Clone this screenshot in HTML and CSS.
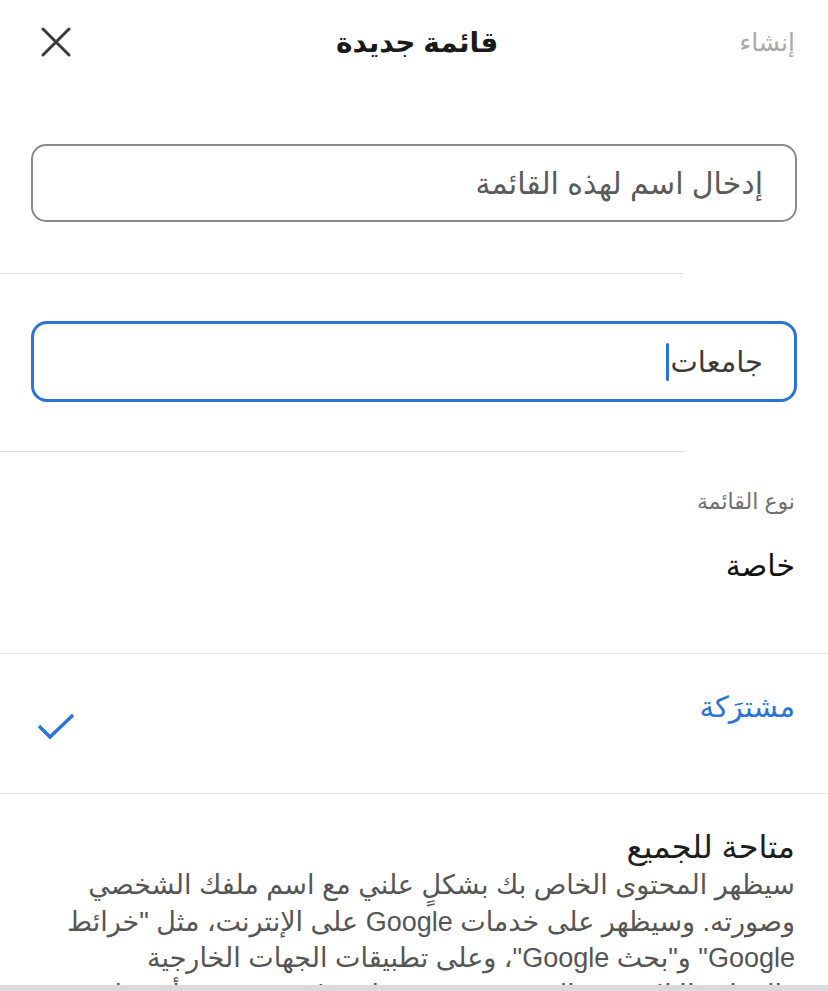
FILE: index.html
```html
<!DOCTYPE html>
<html lang="ar" dir="rtl">
<head>
    <meta charset="UTF-8">
    <meta name="viewport" content="width=device-width, initial-scale=1.0">
    <title>قائمة جديدة</title>
    <link rel="stylesheet" href="styles.css">
</head>
<body>

<div class="top-bar">
    <span class="create">إنشاء</span>
    <span class="title">قائمة جديدة</span>
    <span class="close">
        <svg width="30" height="30" viewBox="0 0 30 30">
            <path d="M2 2 L28 28 M28 2 L2 28" stroke="#3a3a3a" stroke-width="3" stroke-linecap="round" fill="none"/>
        </svg>
    </span>
</div>

<div class="section first">
    <div class="input-box">
        <span class="placeholder">إدخال اسم لهذه القائمة</span>
    </div>
</div>
<div class="short-line"></div>

<div class="section second">
    <div class="input-box active">
        <span class="value">جامعات</span><span class="caret"></span>
    </div>
</div>
<div class="short-line"></div>

<div class="type-block">
    <div class="type-label">نوع القائمة</div>
    <div class="option-name">خاصة</div>
</div>

<div class="option-row">
    <span class="option-name selected">مشترَكة</span>
    <svg class="check" width="40" height="28" viewBox="0 0 40 28">
        <path d="M3 14 L14 25 L37 3" stroke="#2a74d6" stroke-width="3.4" fill="none"/>
    </svg>
</div>

<div class="public-block">
    <div class="public-title">متاحة للجميع</div>
    <p class="public-text">سيظهر المحتوى الخاص بك بشكلٍ علني مع اسم ملفك الشخصي<br>
    وصورته. وسيظهر على خدمات Google على الإنترنت، مثل "خرائط<br>
    Google" و"بحث Google"، وعلى تطبيقات الجهات الخارجية<br>
    والمواقع الإلكترونية التي تستخدم خدمات Google، ومن أبرزها</p>
</div>

<div class="bottom-bar"></div>

</body>
</html>
```

FILE: styles.css
```css
/* General styling */
body {
    font-family: "Liberation Sans", "DejaVu Sans", sans-serif;
    margin: 0;
    padding: 0;
    background-color: #ffffff;
    color: #1c1c1c;
    overflow: hidden;
}

/* Header */
.top-bar {
    height: 84px;
    display: flex;
    align-items: center;
    justify-content: space-between;
    padding: 0 33px 0 41px;
}

.create {
    font-size: 25px;
    color: #a9a9a9;
}

.title {
    font-size: 28px;
    font-weight: bold;
    color: #1a1a1a;
    margin-left: 24px;
}

.close {
    display: flex;
    width: 30px;
    height: 30px;
}

/* Text fields */
.section {
    padding: 0 31px;
}

.section.first {
    padding-top: 60px;
    padding-bottom: 51px;
}

.section.second {
    padding-top: 47px;
    padding-bottom: 49px;
}

.input-box {
    height: 74px;
    border: 2px solid #8a8a8a;
    border-radius: 15px;
    display: flex;
    align-items: center;
    padding: 0 32px;
}

.input-box.active {
    height: 75px;
    border: 3px solid #2a74d6;
    border-radius: 16px;
    padding-right: 31px;
}

.placeholder {
    font-size: 30px;
    color: #5a5a5a;
}

.value {
    font-size: 29px;
    color: #3a3a3a;
}

.caret {
    width: 3px;
    height: 38px;
    background-color: #2a74d6;
    border-radius: 2px;
    margin-right: 2px;
}

.short-line {
    height: 1px;
    background-color: #e2e2e2;
    margin-right: 144px;
}

/* List type */
.type-block {
    padding: 38px 33px 0;
    height: 163px;
    border-bottom: 1px solid #e2e2e2;
}

.type-label {
    font-size: 22px;
    color: #707070;
    line-height: 24px;
}

.option-name {
    font-size: 30px;
    color: #111111;
    margin-top: 30px;
    line-height: 44px;
}

.option-row {
    height: 139px;
    border-bottom: 1px solid #e2e2e2;
    display: flex;
    align-items: center;
    justify-content: space-between;
    padding: 0 33px 0 36px;
}

.option-row .option-name {
    font-size: 29px;
    margin-top: 0;
    margin-bottom: 34px;
}

.option-name.selected {
    color: #2a74d6;
}

.check {
    margin-top: 4px;
}

/* Public description */
.public-block {
    padding: 33px 33px 0 30px;
}

.public-title {
    font-size: 32px;
    color: #1e1e1e;
    line-height: 40px;
}

.public-text {
    margin: 0;
    font-size: 27px;
    line-height: 36.5px;
    color: #555555;
    white-space: nowrap;
}

.bottom-bar {
    position: fixed;
    left: 0;
    right: 0;
    bottom: 0;
    height: 6px;
    background-color: #d9d9de;
}
```
